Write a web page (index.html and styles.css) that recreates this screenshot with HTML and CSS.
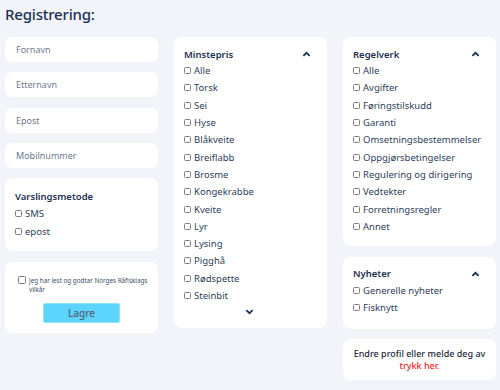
FILE: index.html
```html
<!DOCTYPE html>
<html lang="no">
<head>
    <meta charset="UTF-8">
    <title>Registrering</title>
    <link rel="stylesheet" href="styles.css">
</head>
<body>
    <h1>Registrering:</h1>

    <div class="columns">
        <div class="col">
            <input class="field" type="text" placeholder="Fornavn">
            <input class="field" type="text" placeholder="Etternavn">
            <input class="field" type="text" placeholder="Epost">
            <input class="field" type="text" placeholder="Mobilnummer">

            <div class="card method">
                <h2>Varslingsmetode</h2>
                <label class="opt"><input type="checkbox"> SMS</label>
                <label class="opt"><input type="checkbox"> epost</label>
            </div>

            <div class="card terms">
                <label class="terms-check">
                    <input type="checkbox">
                    <span>Jeg har lest og godtar Norges Råfisklags vilkår</span>
                </label>
                <button class="save-btn">Lagre</button>
            </div>
        </div>

        <div class="col">
            <div class="card list tall">
                <div class="card-head">
                    <h2>Minstepris</h2>
                    <svg class="chev" viewBox="0 0 10 6"><path d="M1.5 5 L5 1.6 L8.5 5" /></svg>
                </div>
                <label class="opt"><input type="checkbox"> Alle</label>
                <label class="opt"><input type="checkbox"> Torsk</label>
                <label class="opt"><input type="checkbox"> Sei</label>
                <label class="opt"><input type="checkbox"> Hyse</label>
                <label class="opt"><input type="checkbox"> Blåkveite</label>
                <label class="opt"><input type="checkbox"> Breiflabb</label>
                <label class="opt"><input type="checkbox"> Brosme</label>
                <label class="opt"><input type="checkbox"> Kongekrabbe</label>
                <label class="opt"><input type="checkbox"> Kveite</label>
                <label class="opt"><input type="checkbox"> Lyr</label>
                <label class="opt"><input type="checkbox"> Lysing</label>
                <label class="opt"><input type="checkbox"> Pigghå</label>
                <label class="opt"><input type="checkbox"> Rødspette</label>
                <label class="opt"><input type="checkbox"> Steinbit</label>
                <div class="more">
                    <svg class="chev" viewBox="0 0 10 6"><path d="M1.5 1 L5 4.4 L8.5 1" /></svg>
                </div>
            </div>
        </div>

        <div class="col">
            <div class="card list">
                <div class="card-head">
                    <h2>Regelverk</h2>
                    <svg class="chev" viewBox="0 0 10 6"><path d="M1.5 5 L5 1.6 L8.5 5" /></svg>
                </div>
                <label class="opt"><input type="checkbox"> Alle</label>
                <label class="opt"><input type="checkbox"> Avgifter</label>
                <label class="opt"><input type="checkbox"> Føringstilskudd</label>
                <label class="opt"><input type="checkbox"> Garanti</label>
                <label class="opt"><input type="checkbox"> Omsetningsbestemmelser</label>
                <label class="opt"><input type="checkbox"> Oppgjørsbetingelser</label>
                <label class="opt"><input type="checkbox"> Regulering og dirigering</label>
                <label class="opt"><input type="checkbox"> Vedtekter</label>
                <label class="opt"><input type="checkbox"> Forretningsregler</label>
                <label class="opt"><input type="checkbox"> Annet</label>
            </div>

            <div class="card list news">
                <div class="card-head">
                    <h2>Nyheter</h2>
                    <svg class="chev" viewBox="0 0 10 6"><path d="M1.5 5 L5 1.6 L8.5 5" /></svg>
                </div>
                <label class="opt"><input type="checkbox"> Generelle nyheter</label>
                <label class="opt"><input type="checkbox"> Fisknytt</label>
            </div>

            <div class="card unsubscribe">
                Endre profil eller melde deg av<br>
                <a href="#">trykk her.</a>
            </div>
        </div>
    </div>
</body>
</html>
```

FILE: styles.css
```css
* {
    box-sizing: border-box;
}

body {
    margin: 0;
    padding: 0 5px;
    background: #f2f4f9;
    font-family: 'Noto Sans', 'Open Sans', sans-serif;
    color: #1c3153;
}

h1 {
    margin: 0;
    padding-top: 4px;
    height: 37px;
    font-size: 15px;
    font-weight: 500;
    letter-spacing: -0.2px;
    color: #1c3153;
}

.columns {
    display: grid;
    grid-template-columns: 153px 153px 153px;
    gap: 16px;
}

.col {
    display: flex;
    flex-direction: column;
    gap: 10px;
}

.field {
    height: 25px;
    border: none;
    border-radius: 7px;
    background: white;
    padding: 0 11px;
    font-family: inherit;
    font-size: 9px;
    color: #1c3153;
}

.field::placeholder {
    color: #6d7a90;
}

.field:nth-of-type(3) {
    margin-top: 1px;
}

.card {
    background: white;
    border-radius: 8px;
}

h2 {
    margin: 0;
    font-size: 9.5px;
    font-weight: 600;
    color: #1c3153;
}

.opt {
    display: flex;
    align-items: center;
    gap: 3px;
    height: 17.3px;
    font-size: 9.5px;
    color: #2c3e5c;
}

input[type="checkbox"] {
    appearance: none;
    -webkit-appearance: none;
    width: 7px;
    height: 7px;
    margin: 0;
    border: 1px solid #7d7d7d;
    border-radius: 1.5px;
    background: white;
    flex-shrink: 0;
}

.method {
    padding: 12px 10px 11px;
}

.method h2 {
    margin-bottom: 1px;
}

.method .opt {
    height: 18px;
}

.terms {
    margin-top: 1px;
    padding: 14px 6px 10px 13px;
    display: flex;
    flex-direction: column;
    align-items: center;
}

.terms-check {
    display: flex;
    align-items: flex-start;
    gap: 3px;
    align-self: flex-start;
    font-size: 6.3px;
    line-height: 9px;
    color: #3d4f6b;
}

.terms-check input {
    width: 8px;
    height: 8px;
    margin-top: 0;
}

.save-btn {
    margin-top: 9px;
    margin-right: 7px;
    width: 77px;
    height: 20px;
    border: 1px solid #8ee3ff;
    border-radius: 2px;
    background: #5cd4fd;
    font-family: inherit;
    font-size: 10px;
    font-weight: 500;
    color: #546275;
}

.list {
    padding: 10px 12px 11px 10px;
}

.card-head {
    display: flex;
    justify-content: space-between;
    align-items: center;
    height: 14px;
    margin-bottom: 1px;
}

.chev {
    width: 9px;
    height: 6px;
    margin-right: 4px;
}

.chev path {
    fill: none;
    stroke: #1c3153;
    stroke-width: 2;
}

.tall {
    height: 291px;
}

.more {
    display: flex;
    justify-content: center;
    padding-top: 5px;
}

.more .chev {
    margin: 0;
}

.news {
    margin-top: 1px;
    padding-bottom: 12px;
}

.unsubscribe {
    padding: 9px 6px 8px;
    text-align: center;
    font-size: 9px;
    font-weight: 500;
    line-height: 12px;
    color: #1c2b40;
}

.unsubscribe a {
    color: #ee1c25;
    text-decoration: none;
}
```
